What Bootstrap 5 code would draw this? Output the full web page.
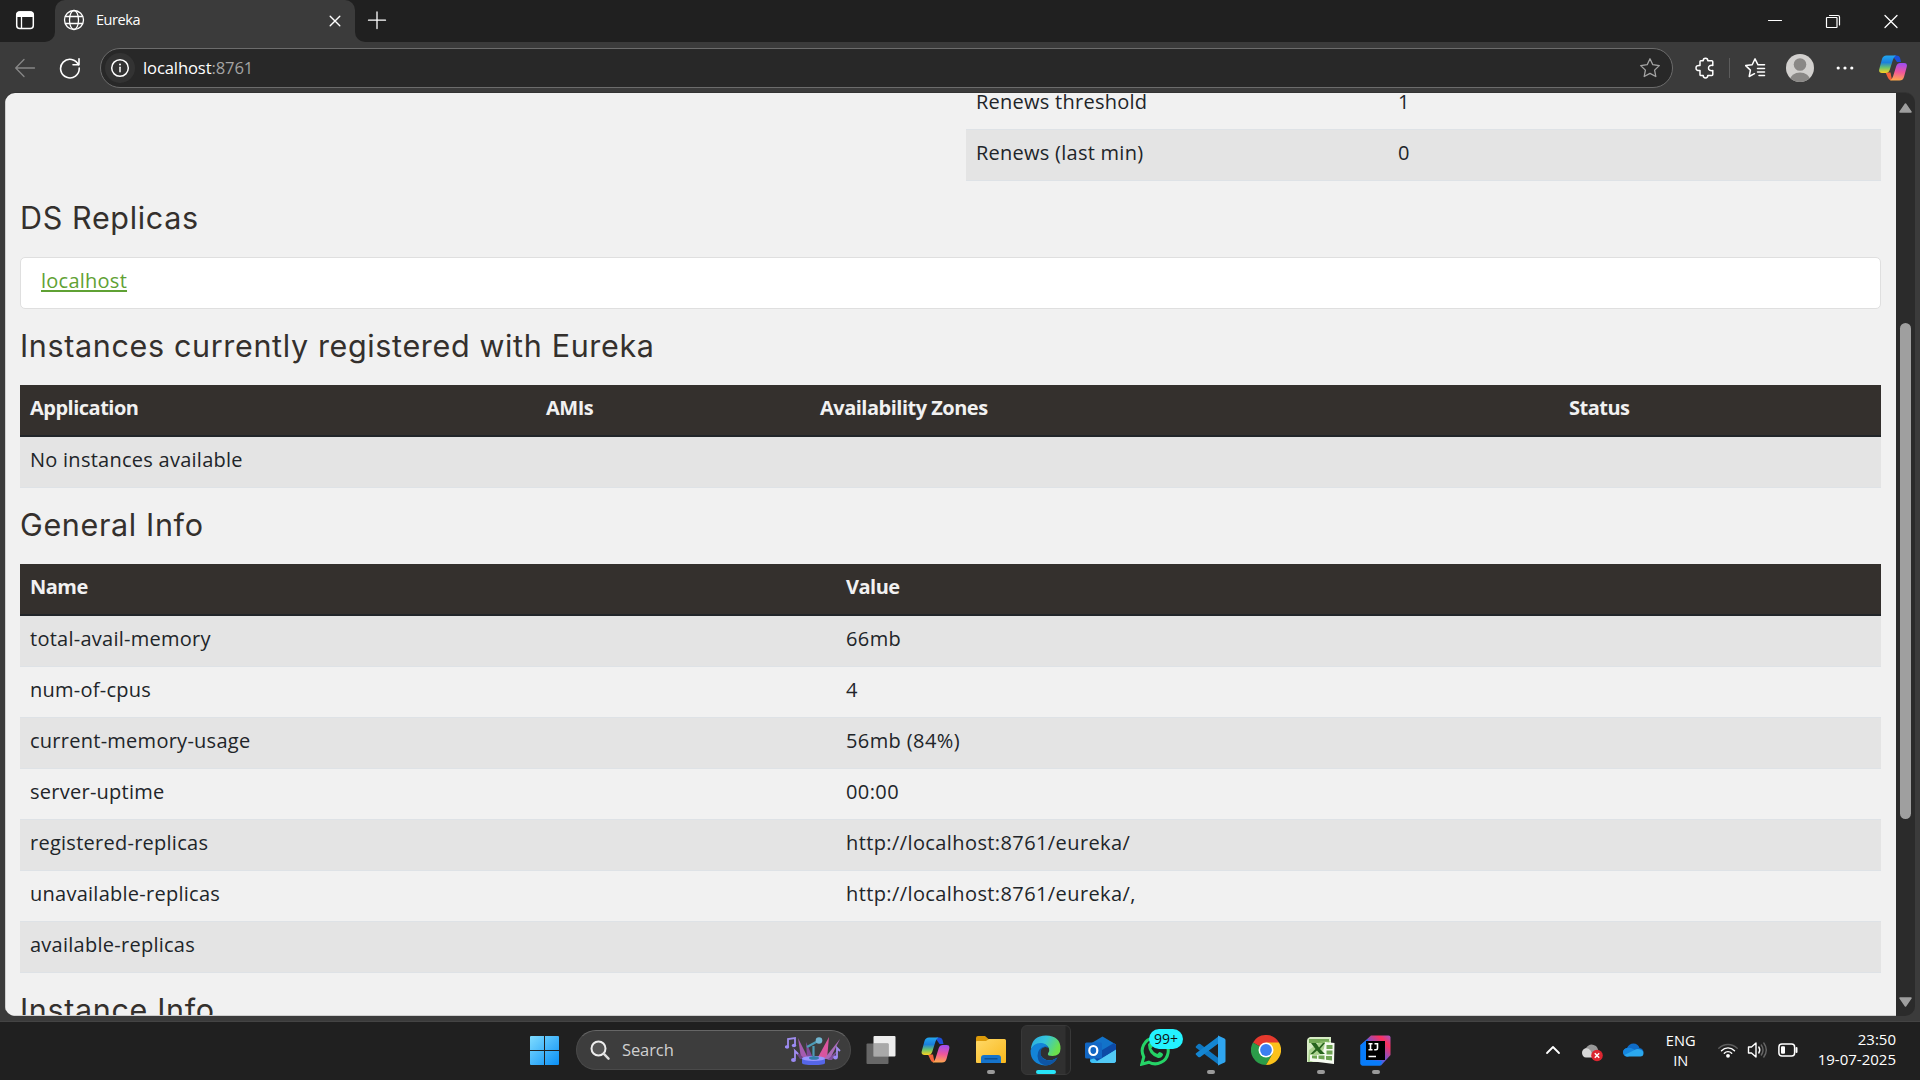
<!DOCTYPE html>
<html lang="en">
<head>
<meta charset="utf-8">
<title>Eureka</title>
<link rel="stylesheet" href="https://cdn.jsdelivr.net/npm/bootstrap@5.3.0/dist/css/bootstrap.min.css">
<script src="https://cdn.jsdelivr.net/npm/bootstrap@5.3.0/dist/js/bootstrap.bundle.min.js"></script>
<style>
body{width:1920px;height:1080px;overflow:hidden;background:#3b3b3b;font-family:"Open Sans","Noto Sans",sans-serif;display:flex;flex-direction:column}
svg{display:block;flex:none}
.ln{fill:none;stroke:#fff;stroke-linecap:round;stroke-linejoin:round}
/* title bar */
.titlebar{height:42px;background:#202020;color:#fff;flex:none}
.tabs-btn{width:55px;background:#202020;border-bottom-right-radius:10px;padding-left:15px}
.tab-under{background:linear-gradient(#202020,#202020) 0 0/100% 20px no-repeat #3b3b3b}
.tab-active{width:300px;background:#3b3b3b;border-radius:10px 10px 0 0;padding:0 13px 3px 8px}
.tab-title{font-size:14.5px;letter-spacing:-.45px;line-height:20px;margin-left:11px}
.tab-rest{background:#202020;border-bottom-left-radius:10px}
.win-btn{width:58px}
/* toolbar */
.toolbar{height:51px;flex:none}
.nav-btn{width:45px}
.omnibox{width:1573px;height:40px;border:1px solid #6c6c6c;border-radius:20px;background:#282828;padding:0 11px 0 4px;margin-left:10px}
.info-dot{width:30px;height:30px;border-radius:50%;background:#333}
.addr{font-size:16.6px;letter-spacing:-.12px;color:#fff;margin-left:8px;line-height:24px}
.addr span{color:#a3a3a3}
/* page viewport */
.viewport{height:923px;flex:none;margin:0 5px;border-radius:10px;overflow:hidden;background:#2b2b2b;box-shadow:0 -1px 0 #333}
.page{width:1891px;background:#f1f1f1;border-left:1px solid #cfcfcf;padding:0 15px 0 14px;overflow:hidden;color:#212529;border-bottom:1px solid #cfcfcf}
.page .table{--bs-table-bg:transparent;margin:0;border-collapse:separate;border-spacing:0;table-layout:fixed;font-size:20px;letter-spacing:.26px;color:#212529;width:100%}
.page .table>*>tr>*{height:51px;padding:8px 10px 12px;line-height:30px;border:0;border-bottom:1px solid #dee2e6;box-shadow:none;white-space:nowrap}
.page .table>*>tr>td+td{letter-spacing:.4px}
.page .table>thead>tr>th{height:52px;padding:8px 10px 12px;background:#34302d;color:#f1f1f1;font-weight:700;letter-spacing:-.5px;border-bottom:2px solid #212529}
.page .table>tbody>tr.shade>td{background:#e4e4e4}
.page .first-table{width:915px;margin:-14px 0 0 auto}
.sect{font:425 30.5px/36px Inter,"Open Sans",sans-serif;letter-spacing:.65px;color:#34302d;margin:19px 0 21px;white-space:nowrap}
.replicas{height:52px;border:1px solid #dfdfdf;border-radius:5px;background:#fff;padding:8px 20px;font-size:20px;line-height:30px;letter-spacing:.25px}
.replicas a{color:#5fa134;text-decoration:underline;text-decoration-thickness:2px;text-underline-offset:2px;text-decoration-skip-ink:none}
.scroller{width:19px;padding:10px 0 9px}
.thumb{width:11px;height:496px;border-radius:6px;background:#9f9f9f;margin-top:210px}
/* taskbar */
.taskbar{height:59px;margin-top:auto;background:#202020;border-top:1px solid #444;color:#fff;flex:none;padding-bottom:2px}
.start-area{padding-left:530px;width:853px}
.searchbox{width:275px;height:40px;border-radius:20px;background:#3d3d3d;border:1px solid #4a4a4a;border-top-color:#666;padding:0 9px 0 13px;margin-left:17px;color:#d0d0d0}
.searchbox span{font-size:16.5px;margin-left:12px;letter-spacing:-.1px;padding-top:1px}
.app{width:55px;height:56px;position:relative}
.app.run::after{content:"";position:absolute;left:24px;top:48px;width:8px;height:4px;border-radius:2px;background:#9a9a9a}
.app.act::before{content:"";position:absolute;left:3px;top:3px;width:50px;height:50px;border-radius:6px;background:linear-gradient(90deg,#303030 43px,#242424 44px);border:1px solid #383838}
.app.act::after{left:18px;width:20px;background:#27e4f8}
.app svg{position:relative}
.count{position:absolute;left:21px;top:7px;width:34px;height:20px;border-radius:10px;background:#24f3ff;color:#111;font-size:14px;line-height:20px;text-align:center}
.traytext{font-size:14.6px;line-height:20px}
</style>
</head>
<body>
<svg width="0" height="0" class="position-absolute">
<defs>
<linearGradient id="ga" x1="0" y1="0" x2="0" y2="1"><stop offset="0" stop-color="#22a7f0"/><stop offset=".4" stop-color="#1b7fdc"/><stop offset=".7" stop-color="#6cc36c"/><stop offset="1" stop-color="#ffd21f"/></linearGradient>
<linearGradient id="gb" x1=".4" y1="0" x2=".3" y2="1"><stop offset="0" stop-color="#a04df0"/><stop offset=".5" stop-color="#f0569b"/><stop offset="1" stop-color="#ffab4a"/></linearGradient>
<linearGradient id="gw" x1="0" y1="0" x2="1" y2="1"><stop offset="0" stop-color="#7fdcff"/><stop offset="1" stop-color="#0a8ff5"/></linearGradient>
<linearGradient id="ge" x1="0" y1="0" x2="1" y2=".4"><stop offset="0" stop-color="#2aa9e0"/><stop offset=".5" stop-color="#35c5dc"/><stop offset="1" stop-color="#6be04c"/></linearGradient>
<linearGradient id="gj" x1="0" y1="1" x2="1" y2="0"><stop offset=".25" stop-color="#087cfa"/><stop offset=".5" stop-color="#6b57d8"/><stop offset=".8" stop-color="#fe315d"/><stop offset="1" stop-color="#a055c8"/></linearGradient>
<linearGradient id="gf" x1="0" y1="0" x2="1" y2="1"><stop offset="0" stop-color="#ffd968"/><stop offset="1" stop-color="#f9b81c"/></linearGradient>
<symbol id="copilot" viewBox="0 0 28 26">
<path d="M15 .5h2.500q3 0 3.700 3l.8 3.500h-4L14.500 2z" fill="#1c4fd8"/>
<path d="M6.500 17.500h5L13 25q-3 .8-4.200-2.500z" fill="#f4623a"/>
<path d="M7.500.5H17q-2 1-3 4L10.700 15q-1 3-4 3H3Q-.7 18 .3 14L3 4Q4 .5 7.500.5z" fill="url(#ga)"/>
<path d="M20.500 25.500H11q2-1 3-4L17.300 11q1-3 4-3H25q3.700 0 2.700 4L25 22q-1 3.500-4.500 3.500z" fill="url(#gb)"/>
</symbol>
</defs>
</svg>

<header class="titlebar d-flex">
  <div class="tab-under d-flex"><div class="tabs-btn d-flex align-items-center">
    <svg width="20" height="20" viewBox="0 0 20 20" style="margin-top:-2px"><rect x="1.700" y="2" width="16.600" height="16.500" rx="3" class="ln" stroke-width="1.500"/><path d="M1.500 7V4.500Q1.500 1.300 5 1.300h10q3.500 0 3.500 3.200V7z" fill="#fff"/><path d="M6.500 6v12" class="ln" stroke-width="1.300"/></svg>
  </div></div>
  <div class="tab-under d-flex"><div class="tab-active d-flex align-items-center">
    <svg width="22" height="22" viewBox="0 0 22 22" class="ln" stroke-width="1.300"><circle cx="11" cy="11" r="9.500"/><ellipse cx="11" cy="11" rx="4.500" ry="9.500"/><path d="M2.500 7.500h17M2.500 14.500h17"/></svg>
    <span class="tab-title">Eureka</span>
    <svg class="ms-auto" width="14" height="14" viewBox="0 0 14 14"><path d="M2.200 3.200l9.600 9.600M11.800 3.200l-9.600 9.600" class="ln" stroke-width="1.400"/></svg>
  </div></div>
  <div class="tab-under d-flex flex-grow-1"><div class="tab-rest d-flex flex-grow-1 align-items-center">
    <svg width="20" height="20" viewBox="0 0 20 20" style="margin:-3px 0 0 12px"><path d="M10 2v16.500M1.500 10.200h17" class="ln" stroke-width="1.300"/></svg>
    <div class="d-flex ms-auto">
      <div class="win-btn d-flex justify-content-center"><svg width="16" height="16" viewBox="0 0 16 16"><path d="M1.500 7.500h13" class="ln" stroke-width="1.100"/></svg></div>
      <div class="win-btn d-flex justify-content-center"><svg width="16" height="16" viewBox="0 0 16 16"><path d="M1.500 5q0-.5.5-.5h9.500q.5 0 .5.500v9q0 .5-.5.500H2q-.5 0-.5-.5zM4.500 2.500h8.500q1.500 0 1.500 1.500v8" class="ln" stroke-width="1.200"/></svg></div>
      <div class="win-btn d-flex justify-content-center"><svg width="16" height="16" viewBox="0 0 16 16"><path d="M2 2.500l12 12M14 2.500l-12 12" class="ln" stroke-width="1.300"/></svg></div>
    </div>
  </div></div>
</header>

<nav class="toolbar d-flex align-items-center">
  <div class="nav-btn ps-1 d-flex justify-content-center"><svg width="22" height="22" viewBox="0 0 22 22"><path d="M20.500 11H2M10 2.500L1.700 11l8.300 8.500" class="ln" style="stroke:#878787" stroke-width="1.300"/></svg></div>
  <div class="nav-btn ps-1 d-flex justify-content-center"><svg width="22" height="22" viewBox="0 0 22 22"><path d="M19.500 8A9.300 9.300 0 1 0 20.200 11M20 1.800v6h-6" class="ln" stroke-width="1.600"/></svg></div>
  <div class="omnibox d-flex align-items-center">
    <div class="info-dot d-flex align-items-center justify-content-center"><svg width="20" height="20" viewBox="0 0 20 20"><circle cx="10" cy="10" r="8.300" class="ln" stroke-width="1.500"/><path d="M10 9.200v4.500" class="ln" stroke-width="1.500"/><circle cx="10" cy="6.500" r="1" fill="#fff"/></svg></div>
    <div class="addr">localhost<span>:8761</span></div>
    <svg class="ms-auto" width="22" height="22" viewBox="0 0 22 22"><path d="M11 1.800l2.800 5.900 6.500.9-4.700 4.500 1.200 6.400L11 16.400l-5.800 3.100 1.200-6.400L1.700 8.600l6.500-.9z" class="ln" style="stroke:#a5a5a5" stroke-width="1.300"/></svg>
  </div>
  <div class="d-flex justify-content-center" style="width:56px;padding-left:7px"><svg width="22" height="22" viewBox="0 0 22 22"><path d="M6 4.500q0-.8.800-.8H9.200Q9.200 1.200 11.500 1.200t2.300 2.500h4q1 0 1 1V8.400Q14.500 8 14.500 11t4.300 2.600v4q0 1-1 1h-4q0 2.400-2.300 2.400t-2.300-2.400H6.800q-.8 0-.8-.8V13.500Q2 14 2 11t4-2.500z" class="ln" stroke-width="1.500"/></svg></div>
  <div style="width:1px;height:20px;background:#5c5c5c"></div>
  <div class="d-flex justify-content-center" style="width:51px;padding-right:2px"><svg width="22" height="22" viewBox="0 0 22 22"><path d="M14 7.800L11 1.800 8.200 7.700l-6.500.9 4.700 4.500-1.200 6.400L10.500 16.700M14 7.800h6.500M13.500 11.500h7M13.500 15h7M15 18.500h5.500" class="ln" stroke-width="1.500"/></svg></div>
  <svg width="28" height="28" viewBox="0 0 28 28" style="margin-left:5px"><defs><clipPath id="av"><circle cx="14" cy="14" r="14"/></clipPath></defs><g clip-path="url(#av)"><path d="M0 0h28v28H0z" fill="#d2d0ce"/><circle cx="14" cy="10.500" r="6.300" fill="#8a8886"/><ellipse cx="14" cy="26" rx="10" ry="7.500" fill="#8a8886"/></g></svg>
  <svg width="20" height="10" viewBox="0 0 20 10" style="margin-left:21px"><g fill="#fff"><circle cx="3.200" cy="5" r="1.600"/><circle cx="10" cy="5" r="1.600"/><circle cx="16.800" cy="5" r="1.600"/></g></svg>
  <svg width="28" height="26" style="margin-left:24px"><use href="#copilot"/></svg>
</nav>

<div class="viewport d-flex">
  <main class="page">
    <table class="table first-table"><colgroup><col style="width:422px"><col></colgroup><tbody>
      <tr><td>Renews threshold</td><td>1</td></tr>
      <tr class="shade"><td>Renews (last min)</td><td>0</td></tr>
    </tbody></table>
    <h1 class="sect">DS Replicas</h1>
    <div class="replicas"><a href="#">localhost</a></div>
    <h1 class="sect">Instances currently registered with Eureka</h1>
    <table class="table"><colgroup><col style="width:516px"><col style="width:274px"><col style="width:749px"><col></colgroup>
      <thead><tr><th>Application</th><th>AMIs</th><th>Availability Zones</th><th>Status</th></tr></thead>
      <tbody><tr class="shade"><td colspan="4">No instances available</td></tr></tbody>
    </table>
    <h1 class="sect">General Info</h1>
    <table class="table"><colgroup><col style="width:816px"><col></colgroup>
      <thead><tr><th>Name</th><th>Value</th></tr></thead>
      <tbody>
        <tr class="shade"><td>total-avail-memory</td><td>66mb</td></tr>
        <tr><td>num-of-cpus</td><td>4</td></tr>
        <tr class="shade"><td>current-memory-usage</td><td>56mb (84%)</td></tr>
        <tr><td>server-uptime</td><td>00:00</td></tr>
        <tr class="shade"><td>registered-replicas</td><td>http://localhost:8761/eureka/</td></tr>
        <tr><td>unavailable-replicas</td><td>http://localhost:8761/eureka/,</td></tr>
        <tr class="shade"><td>available-replicas</td><td></td></tr>
      </tbody>
    </table>
    <h1 class="sect">Instance Info</h1>
  </main>
  <div class="scroller d-flex flex-column align-items-center">
    <svg width="13" height="10" viewBox="0 0 13 10"><path d="M6.500 1L12 9H1z" fill="#9f9f9f" stroke="#9f9f9f" stroke-width="1.500" stroke-linejoin="round"/></svg>
    <div class="thumb"></div>
    <svg class="mt-auto" width="13" height="10" viewBox="0 0 13 10"><path d="M6.500 9L12 1H1z" fill="#9f9f9f" stroke="#9f9f9f" stroke-width="1.500" stroke-linejoin="round"/></svg>
  </div>
</div>

<footer class="taskbar d-flex align-items-center">
  <div class="start-area d-flex align-items-center">
    <svg width="29" height="29" viewBox="0 0 29 29"><path d="M0 1q0-1 1-1h13v14H0zM15 0h13q1 0 1 1v13H15zM0 15h14v14H1q-1 0-1-1zM15 15h14v13q0 1-1 1H15z" fill="url(#gw)"/></svg>
    <div class="searchbox d-flex align-items-center">
      <svg width="20" height="20" viewBox="0 0 20 20"><circle cx="8.500" cy="8.500" r="7" fill="#555" stroke="#eee" stroke-width="2"/><path d="M13.700 13.700l4.800 5" stroke="#ddd" stroke-width="2.400" stroke-linecap="round"/></svg>
      <span>Search</span>
      <svg class="ms-auto" width="56" height="30" viewBox="0 0 56 30">
        <path d="M13 3l10 20h-7z" fill="#a55bb0"/><path d="M21 7l7 16h-6z" fill="#814a9a"/><path d="M44 2L32 24h10z" fill="#d9559f"/><path d="M55 4L39 24h6z" fill="#a96ab8"/><path d="M7 12l13 12h-5z" fill="#6d4786"/><path d="M53 15L42 25h5z" fill="#80509c"/>
        <path d="M17 23v5q0 2 11.500 2T40 28v-5z" fill="#5566e8"/><ellipse cx="28.500" cy="23.500" rx="11.500" ry="2.500" fill="#9a96ff"/><path d="M28.500 23V11M22 12l11-6" stroke="#4d9bb5" stroke-width="2.200" fill="none"/><ellipse cx="29" cy="23" rx="5" ry="1.800" fill="#347eaa"/><circle cx="34" cy="5.500" r="3.300" fill="#71b5d0"/>
        <g fill="none" stroke="#a08df0" stroke-width="1.800"><path d="M3 12V4l7-1v7M10 24v-8l3 3M52 22v-9l3 3"/></g><g fill="#9b8af4"><ellipse cx="2" cy="12" rx="2.200" ry="1.700"/><ellipse cx="9" cy="10.500" rx="2.200" ry="1.700"/><ellipse cx="8.500" cy="25" rx="2.500" ry="2"/><ellipse cx="50.500" cy="22.500" rx="2.300" ry="1.900"/></g>
      </svg>
    </div>
  </div>
  <div class="app d-flex align-items-center justify-content-center"><svg width="30" height="30" viewBox="0 0 30 30"><rect x="7.500" y="1" width="22" height="20.500" rx="1" fill="#ededed"/><rect x=".5" y="8.500" width="22" height="20.500" rx="1" fill="#777" opacity=".82"/><path d="M7.500 8.500h15v13h-15z" fill="#a9a9a9"/></svg></div>
  <div class="app d-flex align-items-center justify-content-center"><svg width="29" height="26"><use href="#copilot"/></svg></div>
  <div class="app run d-flex align-items-center justify-content-center"><svg width="30" height="28" viewBox="0 0 30 28"><path d="M0 2q0-2 2-2h7l3.500 3H28v6H0z" fill="#dc9a0a"/><path d="M0 6q0-1 1-1h9l3-2h15.500Q30 3 30 4.500V26q0 1-1 1H1q-1 0-1-1z" fill="url(#gf)"/><path d="M5 27v-5q0-3 3-3h14q3 0 3 3v5z" fill="#1674cc"/><path d="M8.500 22.800h13" stroke="#0b4b8d" stroke-width="1.300"/></svg></div>
  <div class="app run act d-flex align-items-center justify-content-center"><svg width="31" height="31" viewBox="0 0 31 31"><path d="M.8 14.500Q2 .5 16 .5 30.500 1 30.500 13.500q0 7.500-8 7.500-5.500 0-4.500-2.500 2-2 1-5Q17 8.700 11 8.700 4 9 .8 14.500z" fill="url(#ge)"/><path d="M.5 15.500Q3 7.500 11.500 8q5 .5 7 4.500-6-2-8 3-1.500 7 6 9.500 6 1 11-2.500-4.500 8-12.500 8Q.5 29 .5 15.500z" fill="#1384d8"/><path d="M18.500 12.500q-6.500-2-8 4-.5 8 8 9 5 0 9-3-4 7.500-11 8-8.500-1-9-9.500 0-8 7-9.500 3-.3 4 1z" fill="#0e55a4"/></svg></div>
  <div class="app d-flex align-items-center justify-content-center"><svg width="32" height="28" viewBox="0 0 32 28"><path d="M5 8L17.500.5 31 8.500V24q0 3-3 3H8q-3 0-3-3z" fill="#1273ca"/><path d="M31 9v15q0 3-3 3H8q-3 0-3-3l14-7z" fill="#3fc2f5"/><path d="M31 9v5L12 25l-5-5 22-13z" fill="#0d4aa6"/><path d="M31 13.500v10.500q0 3-3 3H10z" fill="#52c9f5"/><rect y="6.500" width="17" height="16" rx="1.500" fill="#1267c4"/><ellipse cx="8.300" cy="14.500" rx="4" ry="4.500" fill="none" stroke="#fff" stroke-width="2.200"/></svg></div>
  <div class="app d-flex align-items-center justify-content-center"><svg width="31" height="31" viewBox="0 0 31 31"><path d="M1.800 29.200l2-7.200A13 13 0 1 1 9 27.200z" fill="none" stroke="#25d366" stroke-width="3"/><path d="M8 9.500q2-4 4 0l.8 2-1.500 2q2 4 6 5.500l2-2q4 1 3.700 3-1.500 3.500-5 3Q8 19.500 8 9.500z" fill="#25d366"/></svg><span class="count">99+</span></div>
  <div class="app run d-flex align-items-center justify-content-center"><svg width="31" height="31" viewBox="0 0 31 31"><path d="M1 11.200L3.300 9q1-.6 2 0L24 23.500V30L1 12.800q-.8-.8 0-1.600z" fill="#0f78c2"/><path d="M1 19.800L3.300 22q1 .6 2 0L24 8V1L1 18.200q-.8.800 0 1.600z" fill="#1486d2"/><path d="M23 .5l6.500 3q1 .5 1 1.500v21q0 1-1 1.500l-6.500 3z" fill="#2fa5ef"/></svg></div>
  <div class="app d-flex align-items-center justify-content-center"><svg width="30" height="30" viewBox="0 0 30 30"><path d="M15 15L2 7.500A15 15 0 0 1 28 7.500z" fill="#e5392d"/><path d="M15 15L2 7.500A15 15 0 0 0 15 30l6.500-11.200z" fill="#2b9c49"/><path d="M15 30l6.500-11.200L15 7.500H28A15 15 0 0 1 15 30z" fill="#fcc21b"/><path d="M2 7.500h26L15 7.600z" fill="#e5392d"/><circle cx="15" cy="15" r="7.500" fill="#fff"/><circle cx="15" cy="15" r="5.900" fill="#3b7ff0"/></svg></div>
  <div class="app run d-flex align-items-center justify-content-center"><svg width="29" height="29" viewBox="0 0 29 29"><path d="M4 1h21v25H1V5q0-3 3-4z" fill="#d7ecc5"/><path d="M3 3h20v4H3z" fill="#74a957"/><path d="M3 14L15 5h10L6 26H2z" fill="#8fc26c" opacity=".6"/><path d="M19 6l9.500 1-.5 21-24-3 0-6h13z" fill="#f5faf0"/><path d="M20.500 9h6v4h-6zM20.500 14.500h6v4h-6zM20 20h6v4.500l-6-.7zM12.500 19.500h6v4l-6-.7zM6 19.500h5v3.300l-5-.6z" fill="#6ea453"/><path d="M5 7h5l3 4.500L17 7h2l-5 6 5 5h-5l-3-3.500L7 18H4.500l5-5z" fill="#27631e"/></svg></div>
  <div class="app run d-flex align-items-center justify-content-center"><svg width="31" height="31" viewBox="0 0 31 31"><path d="M11 .5h17.500q2 0 2 2V20L21 30.500H2.500q-2 0-2-2V10z" fill="url(#gj)"/><path d="M.5 10L8 4v22h14l-2 4.500H2.500q-2 0-2-2z" fill="#087cfa"/><rect x="6" y="6" width="19" height="19" fill="#000"/><path d="M8.500 8.800h4M10.500 8.800v6M8.500 14.800h4M14.500 8.800h3v4.500q0 1.500-1.500 1.500h-1.800M8.500 21.500h7.500" fill="none" stroke="#fff" stroke-width="1.600"/></svg></div>

  <div class="d-flex align-items-center ms-auto" style="padding-right:24px">
    <svg width="16" height="10" viewBox="0 0 16 10" style="margin-right:21px"><path d="M2 8l6-6 6 6" class="ln" stroke-width="1.800"/></svg>
    <svg width="22" height="20" viewBox="0 0 22 20" style="margin:3px 19px 0 0"><path d="M4 14.500A4.500 4.500 0 0 1 4 6Q8 0 14 4q3 3 3 10.500z" fill="#999"/><path d="M4 15.500A4.700 4.700 0 0 1 3 6.500q6-1.500 8 9z" fill="#d8d8d8"/><circle cx="15" cy="13.500" r="5.800" fill="#dc2630"/><path d="M12.800 11.300l4.400 4.400M17.200 11.300l-4.400 4.400" stroke="#fff" stroke-width="1.500"/></svg>
    <svg width="21" height="14" viewBox="0 0 21 14" style="margin-right:20px"><path d="M4.500 13.500A4.200 4.200 0 0 1 4 5Q6 .5 10.500.5T16.500 5q4 .5 4 4.500z" fill="#0f6cc8"/><path d="M4.500 13.500A4.200 4.200 0 0 1 4 5q3-1 6 1l8 4z" fill="#1686de"/><path d="M4.500 13.500q-2 0-3-1.500l10-5q3-2 7 0 2.500 1.500 2 4-.5 2.500-3 2.500z" fill="#2ba8ee"/></svg>
    <div class="traytext text-center" style="width:34px;margin-right:20px">ENG<br>IN</div>
    <svg width="20" height="16" viewBox="0 0 20 16" style="margin-right:9px"><g class="ln" stroke-width="1.400"><path d="M.8 6.300a13 13 0 0 1 18.400 0" style="stroke:#5d5d5d"/><path d="M3.500 8.700a9 9 0 0 1 13 0M6.300 11.200a5.200 5.200 0 0 1 7.400 0"/></g><circle cx="10" cy="13.800" r="1.900" fill="#fff"/></svg>
    <svg width="21" height="18" viewBox="0 0 21 18" style="margin-right:10px"><g class="ln" stroke-width="1.400"><path d="M1.500 6h3L9 2v14l-4.500-4h-3zM11.800 6q2 3 0 6"/><path d="M14.300 4q3.500 5 0 10M16.800 2q5 7 0 14" style="stroke:#666"/></g></svg>
    <svg width="20" height="14" viewBox="0 0 20 14" style="margin-right:20px"><rect x=".9" y="1" width="15.700" height="12" rx="3" class="ln" stroke-width="1.500"/><rect x="3" y="3.300" width="4" height="7.500" rx="1" fill="#fff"/><path d="M18.500 5v4" class="ln" stroke-width="2"/></svg>
    <div class="traytext text-end" style="font-size:15px;margin-top:-3px">23:50<br>19-07-2025</div>
  </div>
</footer>
</body>
</html>
